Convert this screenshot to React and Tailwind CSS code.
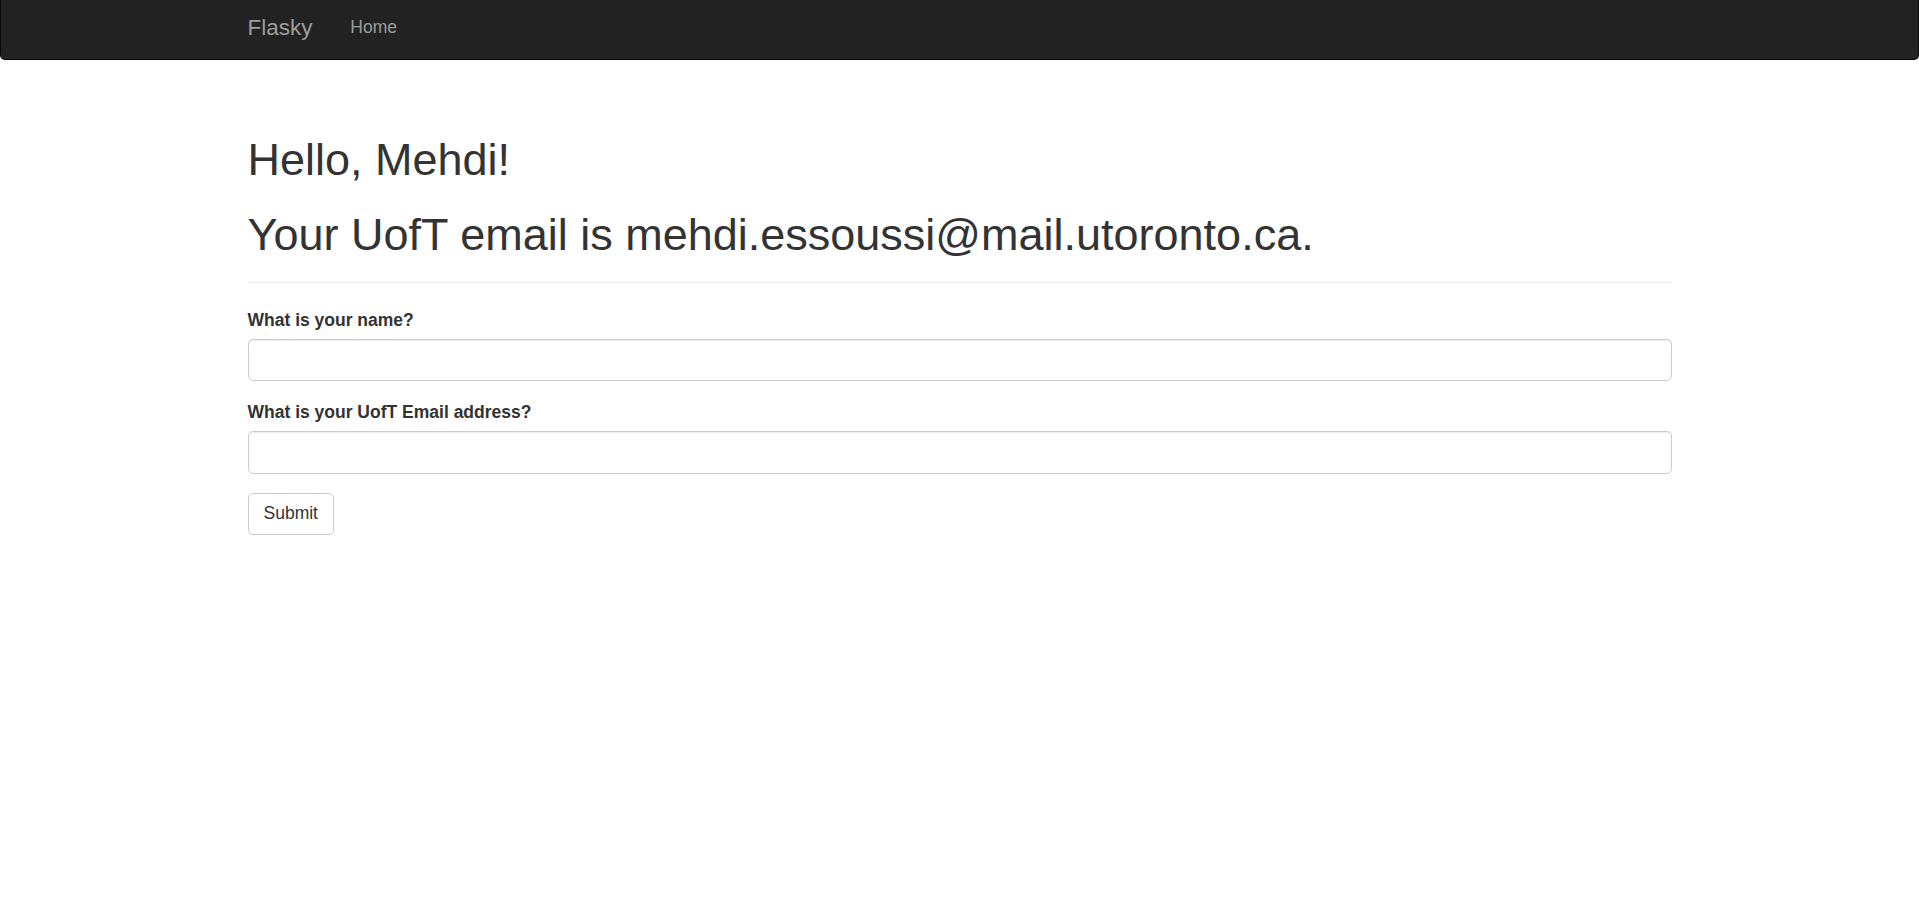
import React, { useState } from "react";

function Navbar() {
  return (
    <nav className="h-[60px] bg-[#222] border-b border-x border-[#080808] rounded-b-[5px]">
      <div className="w-[1424px] mx-auto flex items-start">
        <a href="#" className="pt-[14.8px] pr-[18.75px] text-[22.5px] leading-[25px] text-[#9d9d9d]">
          Flasky
        </a>
        <a href="#" className="pt-[15.4px] pl-[19px] text-[17.5px] leading-[25px] text-[#9d9d9d]">
          Home
        </a>
      </div>
    </nav>
  );
}

function Field({ label, value, onChange }) {
  return (
    <div className="mb-[18.75px]">
      <label className="block mb-[6.25px] text-[17.5px] leading-[25px] font-bold text-[#333]">
        {label}
      </label>
      <input
        type="text"
        value={value}
        onChange={e => onChange(e.target.value)}
        className="block w-full h-[42.5px] px-[15px] border border-[#ccc] rounded-[5px] shadow-[inset_0_1px_1px_rgba(0,0,0,0.075)] text-[17.5px] text-[#555] outline-none"
      />
    </div>
  );
}

export default function App() {
  const [name, setName] = useState("");
  const [email, setEmail] = useState("");

  return (
    <div className="min-h-[901px] bg-white font-['Liberation_Sans',Arial,sans-serif] text-[#333]">
      <Navbar />
      <div className="w-[1424px] mx-auto">
        <div className="mt-[75px] mb-[25px] pb-[10px] border-b border-[#eee]">
          <h1 className="text-[45px] leading-[49.5px] font-normal">Hello, Mehdi!</h1>
          <h1 className="mt-[25px] mb-[12.5px] text-[45px] leading-[49.5px] font-normal">
            Your UofT email is mehdi.essoussi@mail.utoronto.ca.
          </h1>
        </div>
        <form onSubmit={e => e.preventDefault()}>
          <Field label="What is your name?" value={name} onChange={setName} />
          <Field label="What is your UofT Email address?" value={email} onChange={setEmail} />
          <button
            type="submit"
            className="h-[42.5px] px-[15px] border border-[#ccc] rounded-[5px] bg-white text-[17.5px] leading-[25px] text-[#333]"
          >
            Submit
          </button>
        </form>
      </div>
    </div>
  );
}
